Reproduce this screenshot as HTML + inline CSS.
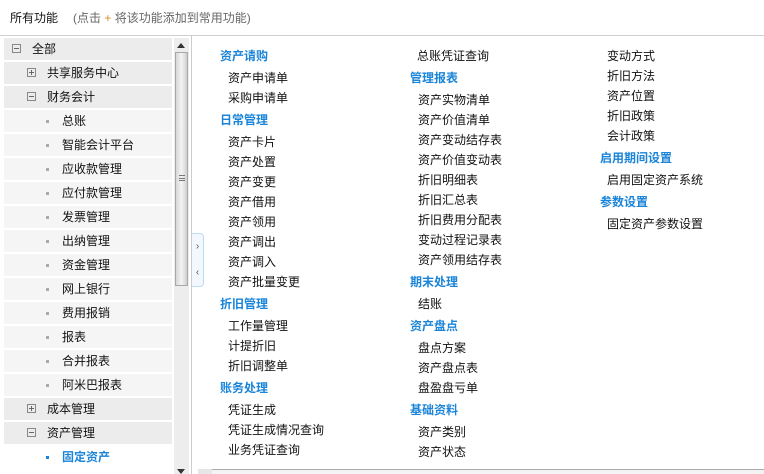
<!DOCTYPE html>
<html><head><meta charset="utf-8"><style>
*{margin:0;padding:0;box-sizing:border-box}
body{width:764px;height:474px;overflow:hidden;background:#fff;font:12px "Liberation Sans","Noto Sans CJK SC",sans-serif;color:#111;position:relative}
.hd{position:absolute;left:10px;top:10px;font-size:12px;line-height:16px}
.hd span{color:#666;position:absolute;left:63px;top:0;white-space:nowrap}
.hl{position:absolute;left:0;top:35px;width:764px;height:1px;background:#d0d0d0}
.tree{position:absolute;left:4px;top:38px;width:168px}
.r{height:24px;line-height:23px;border-bottom:2px solid #fff;background:#ececec;position:relative}
.r.s{background:#f5f5f5}
.r.sel{background:#fff;color:#1a84d8;font-weight:bold}
.bx{position:absolute;top:6px;width:9px;height:9px;border:1px solid #888;}
.bx:before{content:"";position:absolute;left:1px;top:3px;width:5px;height:1px;background:#666}
.bx.p:after{content:"";position:absolute;left:3px;top:1px;width:1px;height:5px;background:#666}
.dot{position:absolute;left:42px;top:10px;width:3px;height:3px;background:#aaa}
.sel .dot{background:#1a84d8}
.t{position:absolute;top:0}
.sb{position:absolute;left:174px;top:38px;width:15px;height:436px;background:#ededed}
.th{position:absolute;left:175px;top:52px;width:13px;height:234px;border:1px solid #a8a8a8;background:linear-gradient(90deg,#d8d8d8,#f4f4f4 50%,#cfcfcf)}
.vl{position:absolute;left:191px;top:36px;width:1px;height:438px;background:#ccc}
.hnd{position:absolute;left:192px;top:233px;width:12px;height:54px;border:1px solid #bcdcf2;border-left:none;border-radius:0 4px 4px 0;background:#f2f8fd;color:#555;font-size:10px;text-align:center;line-height:26px}
.col{position:absolute;top:44px}
.h{height:24px;line-height:24px;color:#1a84d8;font-weight:bold}
.i{height:20px;line-height:20px;padding-left:8px}
.bb{position:absolute;left:198px;top:469px;width:566px;height:5px;border-top:1px solid #aaa;background:#f3f3f3}
.bb2{position:absolute;left:198px;top:469px;width:14px;height:5px;background:#e6e6e6}
</style></head><body>
<div class="hd">所有功能 <span>(点击 <b style="color:#e08a2a;font-weight:normal">+</b> 将该功能添加到常用功能)</span></div>
<div class="hl"></div>
<div class="tree">
<div class="r"><div class="bx" style="left:8px"></div><span class="t" style="left:28px">全部</span></div>
<div class="r"><div class="bx p" style="left:23px"></div><span class="t" style="left:43px">共享服务中心</span></div>
<div class="r"><div class="bx" style="left:23px"></div><span class="t" style="left:43px">财务会计</span></div>
<div class="r s"><i class="dot"></i><span class="t" style="left:58px">总账</span></div>
<div class="r s"><i class="dot"></i><span class="t" style="left:58px">智能会计平台</span></div>
<div class="r s"><i class="dot"></i><span class="t" style="left:58px">应收款管理</span></div>
<div class="r s"><i class="dot"></i><span class="t" style="left:58px">应付款管理</span></div>
<div class="r s"><i class="dot"></i><span class="t" style="left:58px">发票管理</span></div>
<div class="r s"><i class="dot"></i><span class="t" style="left:58px">出纳管理</span></div>
<div class="r s"><i class="dot"></i><span class="t" style="left:58px">资金管理</span></div>
<div class="r s"><i class="dot"></i><span class="t" style="left:58px">网上银行</span></div>
<div class="r s"><i class="dot"></i><span class="t" style="left:58px">费用报销</span></div>
<div class="r s"><i class="dot"></i><span class="t" style="left:58px">报表</span></div>
<div class="r s"><i class="dot"></i><span class="t" style="left:58px">合并报表</span></div>
<div class="r s"><i class="dot"></i><span class="t" style="left:58px">阿米巴报表</span></div>
<div class="r"><div class="bx p" style="left:23px"></div><span class="t" style="left:43px">成本管理</span></div>
<div class="r"><div class="bx" style="left:23px"></div><span class="t" style="left:43px">资产管理</span></div>
<div class="r sel"><i class="dot"></i><span class="t" style="left:58px">固定资产</span></div>
</div>
<div class="sb"></div>
<div style="position:absolute;left:177px;top:43px;width:0;height:0;border:4px solid transparent;border-bottom:5px solid #333;border-top:none"></div>
<div class="th"><div style="position:absolute;left:3px;top:122px;width:6px;height:6px;border-top:1px solid #777;border-bottom:1px solid #777"><div style="margin-top:2px;height:1px;background:#777"></div></div></div>
<div style="position:absolute;left:177px;top:469px;width:0;height:0;border:4px solid transparent;border-top:5px solid #333;border-bottom:none"></div>
<div class="vl"></div>
<div class="hnd">›<br>‹</div>
<div class="col" style="left:220px">
<div class="h">资产请购</div><div class="i">资产申请单</div><div class="i">采购申请单</div>
<div class="h">日常管理</div><div class="i">资产卡片</div><div class="i">资产处置</div><div class="i">资产变更</div><div class="i">资产借用</div><div class="i">资产领用</div><div class="i">资产调出</div><div class="i">资产调入</div><div class="i">资产批量变更</div>
<div class="h">折旧管理</div><div class="i">工作量管理</div><div class="i">计提折旧</div><div class="i">折旧调整单</div>
<div class="h">账务处理</div><div class="i">凭证生成</div><div class="i">凭证生成情况查询</div><div class="i">业务凭证查询</div>
</div>
<div class="col" style="left:410px;top:46px">
<div class="i" style="padding-left:7px">总账凭证查询</div>
<div class="h">管理报表</div><div class="i">资产实物清单</div><div class="i">资产价值清单</div><div class="i">资产变动结存表</div><div class="i">资产价值变动表</div><div class="i">折旧明细表</div><div class="i">折旧汇总表</div><div class="i">折旧费用分配表</div><div class="i">变动过程记录表</div><div class="i">资产领用结存表</div>
<div class="h">期末处理</div><div class="i">结账</div>
<div class="h">资产盘点</div><div class="i">盘点方案</div><div class="i">资产盘点表</div><div class="i">盘盈盘亏单</div>
<div class="h">基础资料</div><div class="i">资产类别</div><div class="i">资产状态</div>
</div>
<div class="col" style="left:600px;top:46px">
<div class="i" style="padding-left:7px">变动方式</div><div class="i" style="padding-left:7px">折旧方法</div><div class="i" style="padding-left:7px">资产位置</div><div class="i" style="padding-left:7px">折旧政策</div><div class="i" style="padding-left:7px">会计政策</div>
<div class="h">启用期间设置</div><div class="i" style="padding-left:7px">启用固定资产系统</div>
<div class="h">参数设置</div><div class="i" style="padding-left:7px">固定资产参数设置</div>
</div>
<div class="bb"></div><div class="bb2"></div>
</body></html>
